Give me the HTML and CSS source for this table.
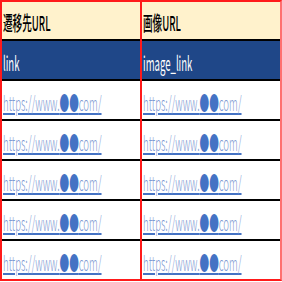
FILE: index.html
```html
<!DOCTYPE html>
<html lang="ja">
<head>
<meta charset="utf-8">
<link rel="stylesheet" href="styles.css">
</head>
<body>
<div class="sheet">
  <div class="cell head"><span class="txt">遷移先URL</span></div>
  <div class="cell head"><span class="txt">画像URL</span></div>
  <div class="cell key"><span class="txt">link</span></div>
  <div class="cell key"><span class="txt">image_link</span></div>
  <div class="cell"><a class="txt url" href="#">https://www.<span class="dot">●●</span>com/</a></div>
  <div class="cell"><a class="txt url" href="#">https://www.<span class="dot">●●</span>com/</a></div>
  <div class="cell"><a class="txt url" href="#">https://www.<span class="dot">●●</span>com/</a></div>
  <div class="cell"><a class="txt url" href="#">https://www.<span class="dot">●●</span>com/</a></div>
  <div class="cell"><a class="txt url" href="#">https://www.<span class="dot">●●</span>com/</a></div>
  <div class="cell"><a class="txt url" href="#">https://www.<span class="dot">●●</span>com/</a></div>
  <div class="cell"><a class="txt url" href="#">https://www.<span class="dot">●●</span>com/</a></div>
  <div class="cell"><a class="txt url" href="#">https://www.<span class="dot">●●</span>com/</a></div>
  <div class="cell"><a class="txt url" href="#">https://www.<span class="dot">●●</span>com/</a></div>
  <div class="cell"><a class="txt url" href="#">https://www.<span class="dot">●●</span>com/</a></div>
</div>
</body>
</html>
```

FILE: styles.css
```css
html, body {
  margin: 0;
  padding: 0;
  background: #ffffff;
}

.sheet {
  display: grid;
  grid-template-columns: 138px 138px;
  column-gap: 2px;
  width: 278px;
  background: #ff1a1a;
  border: 2px solid #ff1a1a;
  border-right-color: #ff7070;
}

.cell {
  border-top: 2px solid #000000;
  background: #ffffff;
  display: flex;
  align-items: flex-end;
  padding: 0 0 5px 1px;
  box-sizing: content-box;
  height: 33px;
  overflow: hidden;
  font-family: "Noto Sans CJK JP", "Noto Sans", sans-serif;
  font-size: 20px;
  line-height: 23px;
}

.head {
  border-top: none;
  height: 32px;
  padding-bottom: 5px;
  background: #fff2cc;
  color: #000000;
  font-weight: 500;
}

.key {
  background: #1f4788;
  color: #ffffff;
}

.txt {
  display: inline-block;
  white-space: nowrap;
  transform: scaleX(0.48);
  transform-origin: left bottom;
}

.url {
  color: #7f9bd3;
  font-weight: 300;
  text-decoration: underline;
  text-decoration-color: #4472c4;
  text-underline-offset: 2px;
}

.dot {
  color: #4472c4;
}
```
